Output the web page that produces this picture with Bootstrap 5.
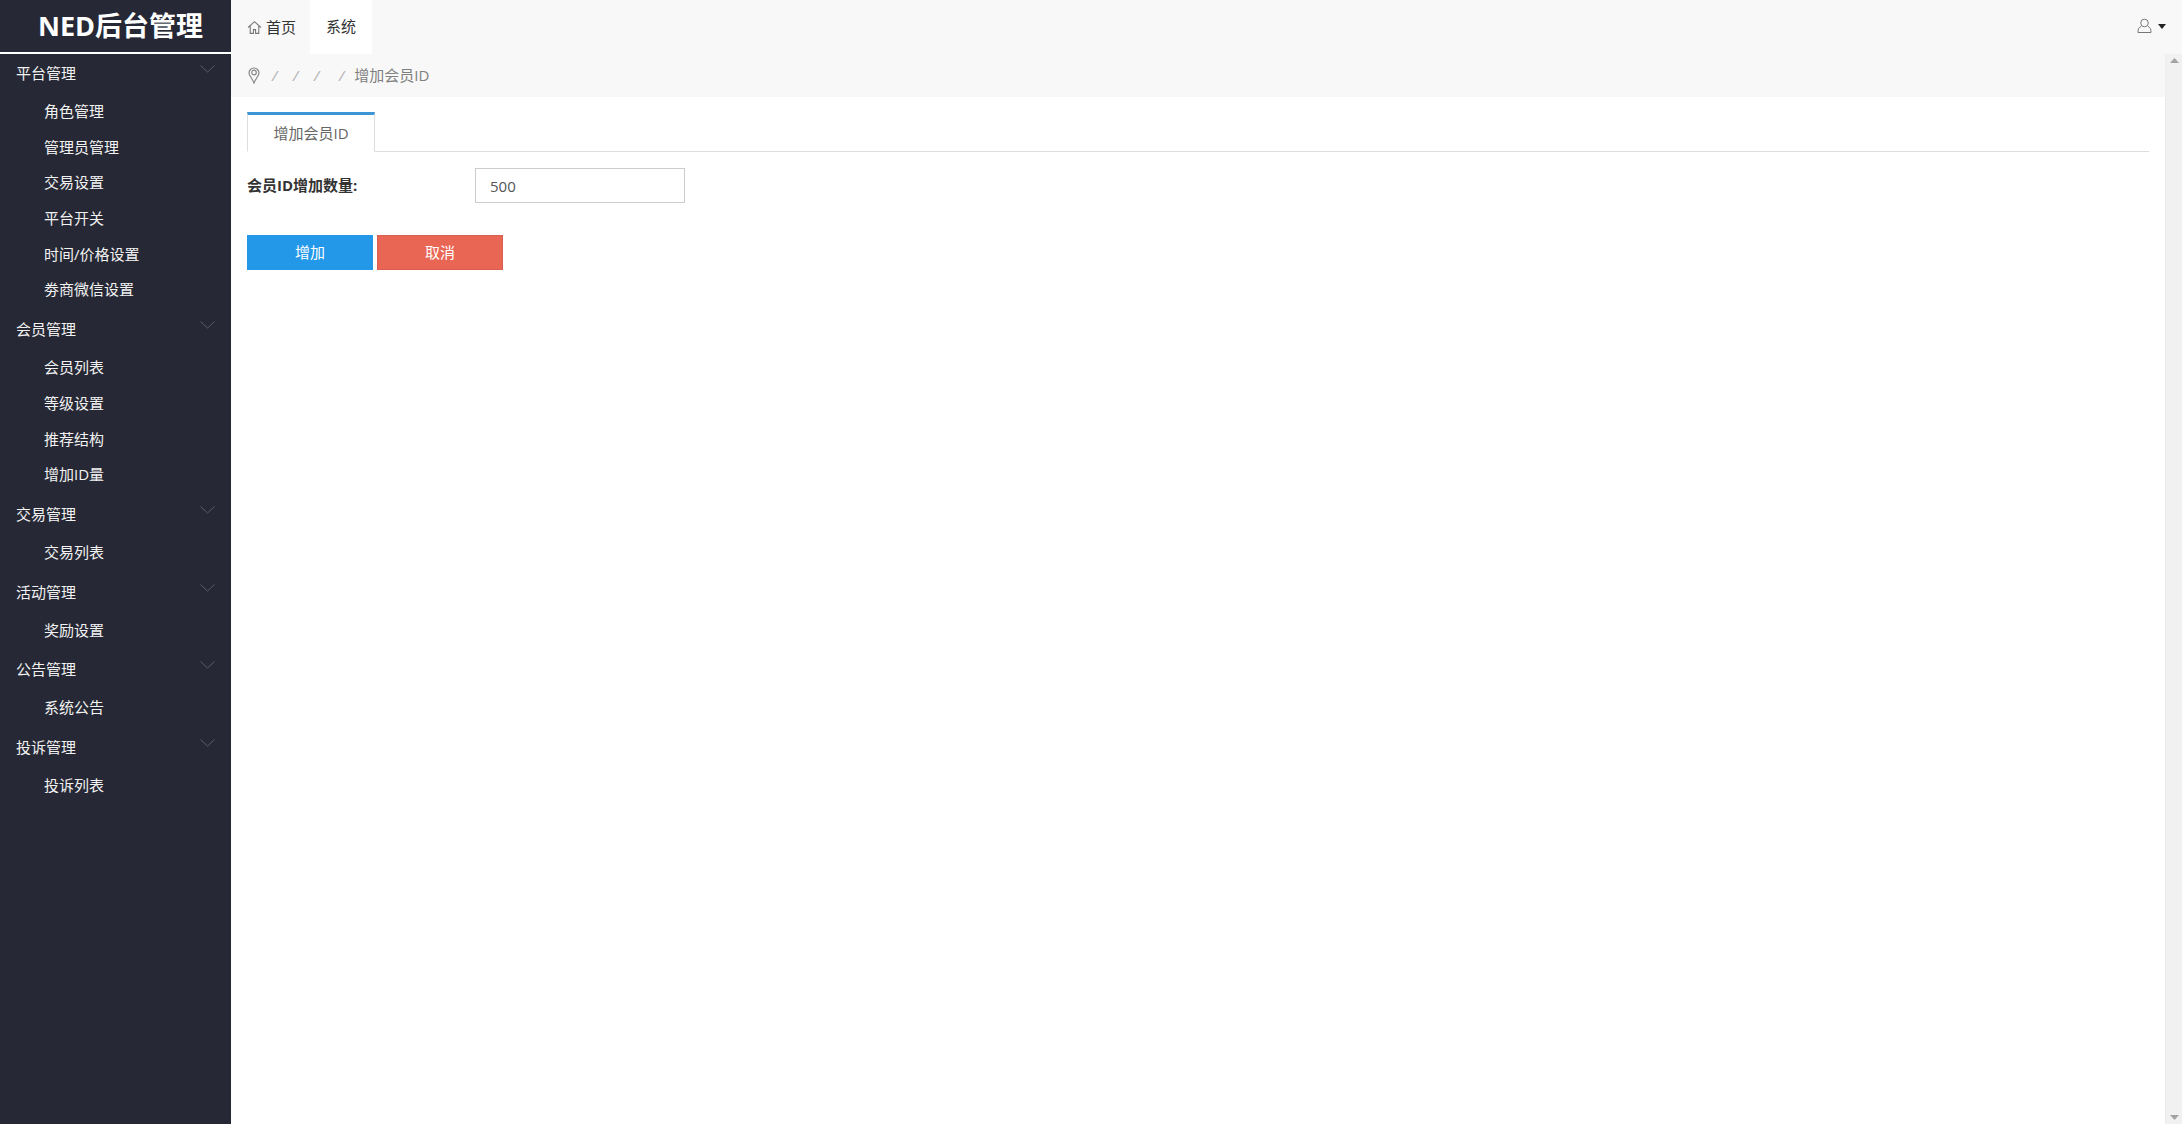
<!DOCTYPE html>
<html lang="zh-CN">
<head>
    <meta charset="UTF-8">
    <meta name="viewport" content="width=device-width, initial-scale=1.0">
    <title>NED后台管理</title>
    <link href="https://cdn.jsdelivr.net/npm/bootstrap@5.3.0/dist/css/bootstrap.min.css" rel="stylesheet">
    <style>
        html, body { height: 100%; overflow: hidden; }
        body { font-family: "Open Sans", "Noto Sans CJK SC", sans-serif; font-size: 15px; color: #333; }
        .side-wrap { width: 231px; background: #262835; flex-shrink: 0; }
        .logo-box { height: 54px; border-bottom: 2px solid #fff; color: #fff; font-size: 27px; font-weight: 700; line-height: 52px; text-align: center; padding-left: 10px; }
        .menu-group { height: 38px; padding: 0 16px; color: #f2f2f2; line-height: 38px; }
        .menu-group svg { margin-top: 11px; }
        .sub-list { padding: 2px 0; margin: 0; list-style: none; }
        .sub-list a { display: block; height: 35.7px; line-height: 35.7px; padding-left: 44px; color: #f2f2f2; text-decoration: none; }
        .top-strip { height: 54px; background: #f8f8f8; }
        .top-link { height: 54px; line-height: 52px; font-size: 15px; color: #333; padding: 0 16px; text-decoration: none; }
        .top-link.home-link { padding-right: 14px; }
        .top-link.on { background: #fff; }
        .top-user { height: 36px; padding-right: 16px; gap: 6px; }
        .crumb-strip { height: 43px; background: #f8f8f8; padding-left: 17px; margin-right: 17px; color: #888; }
        .crumb-strip .breadcrumb { margin: 0 0 0 12px; --bs-breadcrumb-divider-color: #b0b0b0; --bs-breadcrumb-item-padding-x: 0; }
        .crumb-strip .breadcrumb-item { min-width: 21px; font-style: italic; }
        .crumb-strip .breadcrumb-item:nth-child(4) { min-width: 25px; }
        .crumb-strip .breadcrumb-item.active { font-style: normal; color: #808080; min-width: 0; }
        .crumb-strip .breadcrumb-item.active::before { font-style: italic; padding-right: 10px; }
        .crumb-strip .breadcrumb-item.first-crumb { min-width: 0; }
        .crumb-strip .breadcrumb-item.first-crumb::before { display: none; }
        .work-pane { padding: 15px 17px 0 16px; flex-grow: 1; min-width: 0; }
        .tab-line { --bs-nav-tabs-border-color: #ddd; --bs-nav-tabs-border-radius: 0; margin-right: 16px; }
        .tab-line .nav-link.active { width: 128px; height: 40px; padding: 0; line-height: 36px; text-align: center; color: #666; border-radius: 0; border-color: #3c96d6 #ddd #fff; border-top-width: 3px; font-size: 15px; }
        .label-cell { width: 228px; font-weight: 700; font-size: 15px; color: #333; }
        .num-input { width: 210px; height: 35px; border: 1px solid #ccc; border-radius: 0; padding: 0 14px; font-size: 15px; color: #555; }
        .act-row { margin-top: 32px; }
        .act-btn { width: 126px; height: 35px; border-radius: 0; padding: 0; line-height: 33px; font-size: 15px; color: #fff; }
        .act-add { background: #2397e8; border-color: #2397e8; }
        .act-cancel { background: #e96655; border-color: #d9604f; }
        .scroll-col { width: 17px; background: #f1f1f1; border-left: 1px solid #ececec; height: calc(100% - 54px); top: 54px; right: 0; }
    </style>
</head>
<body class="position-relative">
    <div class="d-flex h-100">
        <div class="side-wrap h-100">
            <div class="logo-box">NED后台管理</div>
            <div id="menu"></div>
        </div>
        <div class="flex-grow-1 d-flex flex-column" style="min-width:0">
            <div class="top-strip d-flex align-items-start">
                <a class="top-link home-link d-flex align-items-center" href="#">
                    <svg class="me-1" width="15" height="15" viewBox="0 0 14 14" fill="none" stroke="#777" stroke-width="1"><path d="M1 7 7 1.500 13 7M3 5.500V12.500H6V9H8V12.500H11V5.500"/></svg>首页
                </a>
                <a class="top-link on" href="#">系统</a>
                <div class="ms-auto d-flex align-items-center top-user mt-2">
                    <svg width="15" height="16" viewBox="0 0 15 16" fill="none" stroke="#777" stroke-width="1"><circle cx="7.500" cy="5" r="3.800"/><path d="M4 8.500C1.500 9.500 1 11 1 14.500H14C14 11 13.500 9.500 11 8.500"/></svg>
                    <svg width="8" height="5" viewBox="0 0 8 5"><path d="M0 0H8L4 5Z" fill="#222"/></svg>
                </div>
            </div>
            <div class="crumb-strip d-flex align-items-center">
                <svg width="12" height="17" viewBox="0 0 12 17" fill="none" stroke="#888" stroke-width="1.200"><path d="M6 16C4.500 11.500 1 9 1 6a5 5 0 0 1 10 0c0 3-3.500 5.500-5 10Z"/><circle cx="6" cy="5.500" r="2.300"/></svg>
                <ol class="breadcrumb">
                    <li class="breadcrumb-item first-crumb"></li>
                    <li class="breadcrumb-item"></li>
                    <li class="breadcrumb-item"></li>
                    <li class="breadcrumb-item"></li>
                    <li class="breadcrumb-item active">增加会员ID</li>
                </ol>
            </div>
            <div class="work-pane">
                <ul class="nav nav-tabs tab-line">
                    <li class="nav-item"><a class="nav-link active" href="#">增加会员ID</a></li>
                </ul>
                <form>
                    <div class="d-flex align-items-center mt-3">
                        <label class="label-cell">会员ID增加数量:</label>
                        <input class="form-control num-input" type="text" value="500">
                    </div>
                    <div class="d-flex gap-1 act-row">
                        <button type="button" class="btn act-btn act-add">增加</button>
                        <button type="button" class="btn act-btn act-cancel">取消</button>
                    </div>
                </form>
            </div>
        </div>
    </div>
    <div class="scroll-col position-absolute d-flex flex-column justify-content-between align-items-center py-1">
        <svg width="9" height="5" viewBox="0 0 9 5"><path d="M0 5H9L4.500 0Z" fill="#a3a3a3"/></svg>
        <svg width="9" height="5" viewBox="0 0 9 5"><path d="M0 0H9L4.500 5Z" fill="#a3a3a3"/></svg>
    </div>
    <script>
        const menuData = [
            ["平台管理", ["角色管理", "管理员管理", "交易设置", "平台开关", "时间/价格设置", "劵商微信设置"]],
            ["会员管理", ["会员列表", "等级设置", "推荐结构", "增加ID量"]],
            ["交易管理", ["交易列表"]],
            ["活动管理", ["奖励设置"]],
            ["公告管理", ["系统公告"]],
            ["投诉管理", ["投诉列表"]]
        ];
        const chevron = `<svg width="15" height="8" viewBox="0 0 15 8" fill="none" stroke="#5a5c68" stroke-width="1"><path d="M.5.5 7.500 7 14.500.5"/></svg>`;
        document.getElementById("menu").innerHTML = menuData.map(([title, subs]) => `
            <div class="menu-group d-flex justify-content-between align-items-start">
                <span>${title}</span>${chevron}
            </div>
            <ul class="sub-list">${subs.map(s => `<li><a href="#">${s}</a></li>`).join("")}</ul>
        `).join("");
    </script>
</body>
</html>
